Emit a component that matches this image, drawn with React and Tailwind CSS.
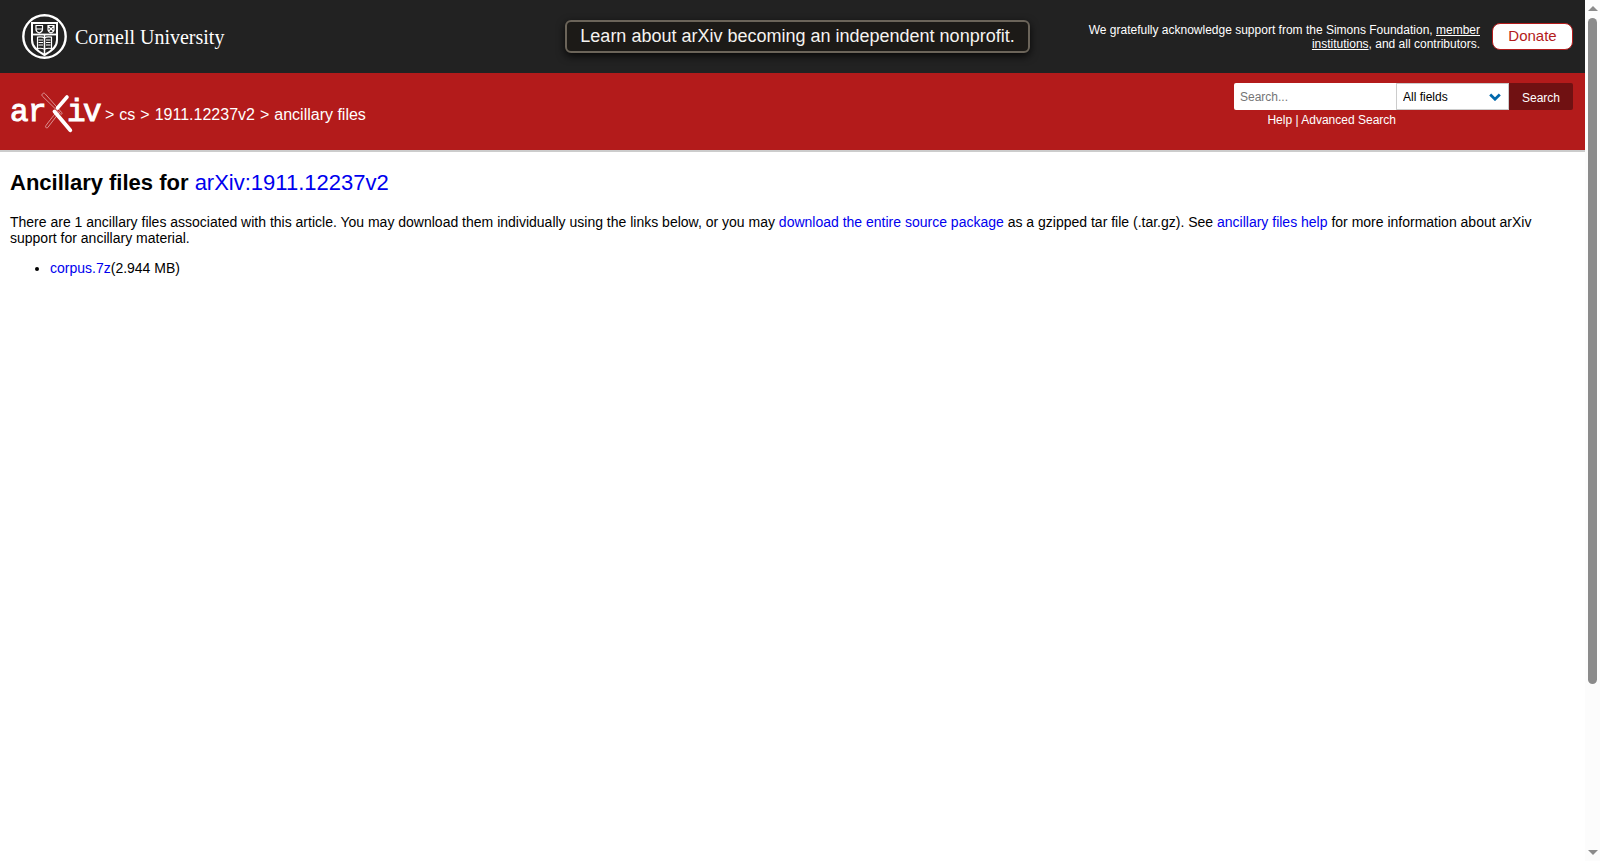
import React, { useState } from 'react';

const files = [{ name: 'corpus.7z', size: '2.944 MB' }];

const searchFields = ['All fields', 'Title', 'Author', 'Abstract', 'Comments', 'arXiv identifier', 'Full text'];

const CornellSeal = () => (
  <svg className="w-[46px] h-[46px] shrink-0" viewBox="0 0 46 46" fill="none" stroke="#fff" aria-hidden="true">
    <circle cx="22.5" cy="22.5" r="21.2" strokeWidth="2.4" />
    {/* shield */}
    <path d="M10 9h25v17c0 7-5 11-12.500 15C15 37 10 33 10 26z" strokeWidth="2" />
    <path d="M10 20.500h25" strokeWidth="1.800" />
    <path d="M22.500 20.500V41" strokeWidth="1.500" />
    {/* small shields */}
    <path d="M14 11.500h6.500v4c0 2-1.500 2.800-3.200 3.500-1.800-.7-3.300-1.500-3.300-3.500zM14 15h6.500" strokeWidth="1.200" />
    <path d="M26 11.500h6v4c0 2-1.300 2.800-3 3.500-1.700-.7-3-1.500-3-3.500zM26 12l3 3 3-3M26.500 17l2.500-2 2.500 2" strokeWidth="1.200" />
    {/* open book */}
    <path d="M22.500 24c-2-1.300-4.500-1.300-7-.8v11.300c2.500-.5 5-.3 7 .8 2-1.100 4.500-1.300 7-.8V23.200c-2.500-.5-5-.5-7 .8z" strokeWidth="1.200" />
    <path d="M16.500 26h4.500M16.500 28.500h4.500M16.500 31h4.500M24 26h4.500M24 28.500h4.500M24 31h4.500" strokeWidth="1.100" />
  </svg>
);

const ArxivLogo = () => (
  <svg className="w-[92px] h-[42px]" viewBox="0 0 92 42" role="img" aria-label="arXiv logo">
    <g fill="#fff" stroke="#fff" strokeWidth="1" fontFamily="'Liberation Mono', monospace" fontSize="31">
      <text x="0" y="29">a</text>
      <text x="18" y="29">r</text>
      <text x="57" y="29">i</text>
      <text x="73" y="29">v</text>
    </g>
    {/* crossed strokes */}
    <path d="M32.500 1.800c1-1 2-.8 2.700.1L51.500 20.300c1 1.200.5 2.500-.8 1.700L32.500 4.300c-.8-.8-.8-1.700 0-2.500z" fill="#b31b1b" stroke="#e0a0a0" strokeWidth=".9" />
    <path d="M50 19.500L37.800 35.500c-.8 1-2.600.2-2.200-1.300.2-.8 8.400-11.200 11.400-14.700" fill="none" stroke="#e0a0a0" strokeWidth=".9" />
    <path d="M57 5L47.500 16" stroke="#fff" strokeWidth="3.600" strokeLinecap="round" />
    <path d="M44.500 19.500L60.300 38.300" stroke="#fff" strokeWidth="3.800" strokeLinecap="round" />
  </svg>
);

const TopBanner = () => (
  <div className="bg-[#222] h-[73px] grid grid-cols-[1fr_auto_1fr] items-center pl-[22px] pr-3">
    <a href="#cornell" className="flex items-center gap-[7px] text-white">
      <CornellSeal />
      <span className="font-['Liberation_Serif',serif] text-[20px] leading-6">Cornell University</span>
    </a>
    <a
      href="#nonprofit"
      className="border-2 border-[#6b6459] rounded-md bg-[#1c1a17] px-[13px] py-[3px] text-[18px] leading-[23px] text-[#f5f3f0] shadow-[0_3px_8px_rgba(0,0,0,0.8)]"
    >
      Learn about arXiv becoming an independent nonprofit.
    </a>
    <div className="flex items-center justify-end gap-3">
      <p className="w-[400px] text-right text-[12px] leading-[14px] text-white">
        We gratefully acknowledge support from the Simons Foundation,{' '}
        <a href="#members" className="underline">member institutions</a>, and all contributors.
      </p>
      <a
        href="#donate"
        className="shrink-0 border border-[#b31b1b] rounded-lg bg-white w-[81px] h-[27px] text-center text-[15px] leading-6 text-[#b31b1b]"
      >
        Donate
      </a>
    </div>
  </div>
);

const SearchForm = () => {
  const [query, setQuery] = useState('');
  const [field, setField] = useState(searchFields[0]);

  return (
    <form className="text-[12px]" onSubmit={(e) => e.preventDefault()}>
      <div className="flex h-[27px]">
        <input
          type="text"
          aria-label="Search term or terms"
          placeholder="Search..."
          value={query}
          onChange={(e) => setQuery(e.target.value)}
          className="w-[162px] rounded-l-xs bg-white px-[6px] text-black placeholder:text-[#757575] outline-none"
        />
        <div className="grid items-center">
          <select
            aria-label="Field to search"
            value={field}
            onChange={(e) => setField(e.target.value)}
            className="col-start-1 row-start-1 h-[27px] w-[113px] appearance-none border border-[#ccc] bg-white pl-[6px] text-black outline-none"
          >
            {searchFields.map((item) => (
              <option key={item}>{item}</option>
            ))}
          </select>
          <svg className="col-start-1 row-start-1 justify-self-end mr-2 w-3 h-2 pointer-events-none" viewBox="0 0 12 8" fill="none" aria-hidden="true">
            <path d="M1.200 1.500L6 6.200l4.800-4.700" stroke="#0068ac" strokeWidth="2.800" />
          </svg>
        </div>
        <button type="submit" className="w-[64px] rounded-r-xs bg-[#701112] pt-[2px] text-white">
          Search
        </button>
      </div>
      <p className="w-[162px] pt-[3px] text-right leading-[14px] text-white">
        <a href="#help">Help</a> | <a href="#advanced">Advanced Search</a>
      </p>
    </form>
  );
};

const Header = () => (
  <div className="bg-[#b31b1b] border-b-2 border-[#ccc] h-[79px] flex justify-between pl-[10px] pr-3 pt-[10px]">
    <nav className="flex items-center gap-[3px] text-[16px] text-white pb-[7px]">
      <a href="#home"><ArxivLogo /></a>
      <h1 className="flex gap-[5px] pt-[4px]">
        <span>&gt;</span>
        <a href="#cs">cs</a>
        <span>&gt;</span>
        <a href="#abs">1911.12237v2</a>
        <span>&gt;</span>
        <span>ancillary files</span>
      </h1>
    </nav>
    <SearchForm />
  </div>
);

const Scrollbar = () => (
  <div className="sticky top-0 h-screen w-[15px] shrink-0 bg-[#fcfcfc] flex flex-col items-center py-[6px]" aria-hidden="true">
    <svg className="w-[10px] h-[5px]" viewBox="0 0 10 5"><path d="M0 5L5 0l5 5z" fill="#8b8b8b" /></svg>
    <div className="flex-1 w-full flex justify-center pt-[7px]">
      <div className="h-4/5 w-[9px] rounded-full bg-[#8b8b8b]" />
    </div>
    <svg className="w-[10px] h-[5px]" viewBox="0 0 10 5"><path d="M0 0l5 5 5-5z" fill="#8b8b8b" /></svg>
  </div>
);

const App = () => {
  return (
    <div className="flex min-h-screen bg-white font-['Liberation_Sans',Arial,sans-serif] text-black">
      <div className="flex-1 min-w-0">
        <header>
          <TopBanner />
          <Header />
        </header>

        <main className="px-[10px] text-[14px] leading-4">
          <h2 className="pt-[18px] text-[22px] leading-[26px] font-bold">
            Ancillary files for <a href="#abs" className="font-normal text-[#00e]">arXiv:1911.12237v2</a>
          </h2>
          <p className="mt-[18px]">
            {`There are ${files.length} ancillary files associated with this article. You may download them individually using the links below, or you may `}
            <a href="#source" className="text-[#00e]">download the entire source package</a> as
            a gzipped tar file (.tar.gz). See <a href="#anc-help" className="text-[#00e]">ancillary files help</a> for
            more information about arXiv support for ancillary material.
          </p>
          <ul className="mt-[14px] pl-10 list-disc">
            {files.map((file) => (
              <li key={file.name}>
                <a href="#corpus" className="text-[#00e]">{file.name}</a>({file.size})
              </li>
            ))}
          </ul>
        </main>
      </div>
      <Scrollbar />
    </div>
  );
};

export default App;
